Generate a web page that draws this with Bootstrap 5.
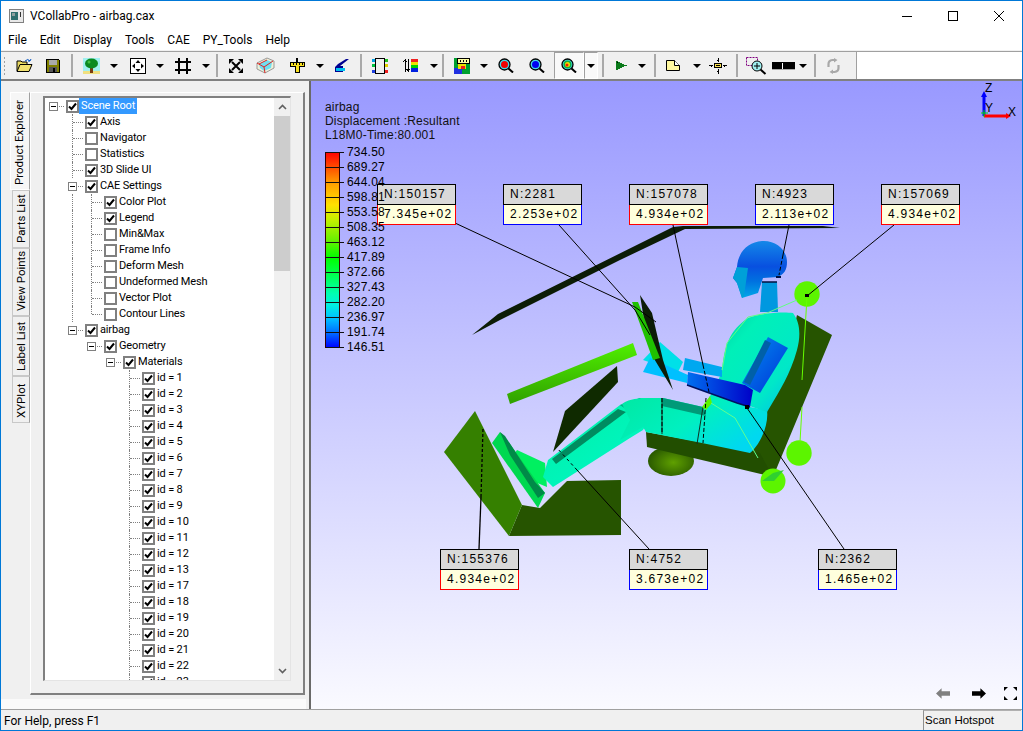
<!DOCTYPE html>
<html lang="en">
<head>
    <meta charset="UTF-8">
    <meta name="viewport" content="width=device-width, initial-scale=1.0">
    <title>VCollabPro - airbag.cax</title>
    <link rel="stylesheet" href="https://cdn.jsdelivr.net/npm/bootstrap@5.3.0/dist/css/bootstrap.min.css">
    <style>
        html, body { height: 100%; margin: 0; overflow: hidden; background: #fff; }
        body { font-family: "Liberation Sans", Arial, sans-serif; font-size: 12px; color: #000; }
        svg { display: block; }
        .app-win { height: 731px; border: 1px solid #0078d7; border-right-width: 1px; background: #fff; }

        .title-row { height: 29px; padding-left: 8px; font-family: Roboto, sans-serif; font-size: 12px; }
        .title-row .app-ico { margin-right: 6px; }
        .win-ctl { width: 46px; }
        .menu-row { height: 21px; padding-left: 7px; font-family: Roboto, sans-serif; font-size: 12px; column-gap: 13px; border-bottom: 1px solid #f0f0f0; }
        .menu-row span { line-height: 21px; }

        .tool-row { height: 30px; border-top: 1px solid #a0a0a0; border-bottom: 2px solid #808080; background: #fff; }
        .tool-strip { width: 856px; background: #f0f0f0; border-right: 1px solid #a0a0a0; padding-left: 8px; }
        .grip { width: 3px; height: 20px; margin-left: -6px; margin-right: 3px; background: radial-gradient(circle, #a0a0a0 1px, transparent 1px) 0 0 / 3px 4px; }
        .tbtn { flex: none; height: 100%; }
        .t8 { width: 8px; } .t12 { width: 12px; } .t14 { width: 14px; } .t16 { width: 16px; } .t26 { width: 26px; }
        .t28 { width: 28px; } .t29 { width: 29px; } .t30 { width: 30px; } .t32 { width: 32px; } .t34 { width: 34px; } .t36 { width: 36px; }
        .tsep { flex: none; width: 2px; height: 23px; background: #a9a9a9; }
        .sep-gap { margin: 0 4px; }
        .caret-dn { width: 0; height: 0; border-left: 4px solid transparent; border-right: 4px solid transparent; border-top: 4px solid #000; }
        .tbtn-on { background: #f9f9f9; border: 1px solid #fff; border-top-color: #a0a0a0; border-left-color: #a0a0a0; }

        .main-row { height: 628px; }
        .left-pane { width: 310px; background: linear-gradient(#f0f0f0 618px, #fafafa 618px); }
        .pane-body { width: 305px; padding-top: 11px; padding-bottom: 14px; }
        .tab-col { width: 29px; padding-left: 9px; }
        .side-tab { writing-mode: vertical-rl; transform: rotate(180deg); background: #f0f0f0; border: 1px solid #c8c8c8; border-left-color: #a0a0a0; width: 18px; margin-left: 2px; line-height: 16px; text-align: left; padding-top: 4px; font-family: Roboto, sans-serif; font-size: 11.5px; }
        .side-tab-on { background: #f6f6f6; border-color: #fff; border-left-color: #a0a0a0; margin-left: 0; width: 20px; }
        .tab-h97 { height: 98px; } .tab-h57 { height: 58px; } .tab-h66 { height: 68px; } .tab-h59 { height: 60px; } .tab-h47 { height: 47px; }
        .tab-page { width: 275px; background: #f0f0f0; border: 1px solid #fff; border-right: 2px solid #808080; border-bottom: 2px solid #808080; padding: 3px 12px 12px 12px; }
        .tree-box { flex: 1; background: #fff; border: 2px solid #808080; border-right: 1px solid #e4e4e4; border-bottom: 1px solid #e4e4e4; overflow: hidden; }
        .tree-list { flex: 1; overflow: hidden; font-family: Roboto, sans-serif; font-size: 11px; letter-spacing: -.15px; }
        .tree-row { height: 16px; }
        .gut { flex: none; width: 19px; height: 16px; position: relative; }
        .gut-pass::before, .gut-tee::before, .gut-end::before { content: ""; position: absolute; left: 8px; top: 0; bottom: 0; border-left: 1px dotted #808080; }
        .gut-end::before { bottom: 8px; }
        .gut-tee::after, .gut-end::after, .gut-exp::after { content: ""; position: absolute; left: 9px; width: 10px; top: 8px; border-top: 1px dotted #808080; }
        .exp-box { position: absolute; left: 4px; top: 4px; width: 9px; height: 9px; background: #fff; border: 1px solid #808080; z-index: 1; }
        .exp-box::after { content: ""; position: absolute; left: 1px; right: 1px; top: 3px; border-top: 1px solid #000; }
        .chk { flex: none; width: 13px; height: 13px; margin-left: 2px; border: 2px solid #808080; background: #fff; }
        .tree-txt { line-height: 16px; padding: 0 2px; white-space: nowrap; }
        .tree-sel { background: #3399ff; color: #fff; }
        .scroll-col { flex: none; width: 16px; background: #f0f0f0; }
        .scroll-btn { height: 18px; }
        .scroll-thumb { height: 155px; background: #cdcdcd; }
        .splitter { width: 5px; background: #f0f0f0; border-right: 2px solid #696969; }

        .scene { flex: 1; position: relative; overflow: hidden; background: linear-gradient(#9999ff, #fafaff); font-family: "Liberation Sans", Arial, sans-serif; letter-spacing: .2px; }
        .scene-art { position: absolute; left: 0; top: 0; }
        .scene-info { position: absolute; left: 14px; top: 19px; line-height: 14px; color: #111; }
        .legend-box { position: absolute; left: 14px; top: 71px; }
        .legend-bar { width: 15px; height: 196px; border: 1px solid #300; border-width: 0 1px; background: repeating-linear-gradient(#111 0 1px, transparent 1px 15px), linear-gradient(#ff0000, #ff5000 8%, #ffa000 16%, #ffe000 27%, #c0f000 35%, #60f000 46%, #00ff00 54%, #00ff70 66%, #00ffb0 72%, #00f0e0 78%, #00c0ff 85%, #0070ff 92%, #0000ff); }
        .legend-nums { margin-top: -7px; }
        .legend-num { height: 15px; line-height: 17px; }
        .legend-num::before { content: ""; width: 4px; border-top: 1px solid #111; margin-right: 3px; }
        .callout { position: absolute; width: 79px; height: 41px; letter-spacing: 1.25px; line-height: 19px; }
        .callout-id { height: 21px; background: #d9d9d9; border: 1px solid #000; padding-left: 6px; overflow: hidden; white-space: nowrap; }
        .callout-val { height: 20px; background: #ffffdd; border: 1px solid; border-top: 0; padding-left: 6px; overflow: hidden; white-space: nowrap; }
        .val-red { border-color: #f00; } .val-blue { border-color: #00f; }
        .c-a { left: 66px; top: 103px; } .c-b { left: 192px; top: 103px; } .c-c { left: 318px; top: 103px; }
        .c-d { left: 444px; top: 103px; } .c-e { left: 570px; top: 103px; } .c-f { left: 129px; top: 468px; }
        .c-g { left: 318px; top: 468px; } .c-h { left: 507px; top: 468px; }
        .nav-btns { position: absolute; right: 5px; bottom: 9px; }
        .nav-prev { margin-right: 22px; } .nav-next { margin-right: 18px; }

        .status-row { height: 21px; background: #f0f0f0; border-top: 1px solid #a0a0a0; font-family: Roboto, sans-serif; }
        .status-txt { padding-left: 3px; line-height: 22px; }
        .status-pane { width: 98px; margin-right: 1px; font-family: "Liberation Sans", sans-serif; font-size: 11.5px; line-height: 18px; border-left: 1px solid #909090; border-top: 1px solid #b0b0b0; padding-left: 1px; }
    </style>
</head>
<body>
<div class="app-win d-flex flex-column">

    <!-- title bar -->
    <div class="title-row d-flex align-items-center flex-shrink-0">
        <svg class="app-ico" width="15" height="14" viewBox="0 0 15 14" shape-rendering="crispEdges"><rect x=".5" y=".5" width="14" height="13" fill="#e8e8e8" stroke="#808080"/><rect x="2" y="3" width="7" height="8" fill="#2f6f6f"/><rect x="3" y="4" width="3" height="3" fill="#90a0a0"/><rect x="11" y="3" width="1" height="5" fill="#333"/></svg>
        <span>VCollabPro - airbag.cax</span>
        <div class="ms-auto d-flex">
            <div class="win-ctl d-flex justify-content-center"><svg width="10" height="10" viewBox="0 0 10 10"><path d="M0 5.500h10" stroke="#000"/></svg></div>
            <div class="win-ctl d-flex justify-content-center"><svg width="10" height="10" viewBox="0 0 10 10"><rect x=".5" y=".5" width="9" height="9" fill="none" stroke="#000"/></svg></div>
            <div class="win-ctl d-flex justify-content-center"><svg width="10" height="10" viewBox="0 0 10 10"><path d="M0 0l10 10M10 0L0 10" stroke="#000"/></svg></div>
        </div>
    </div>

    <!-- menu -->
    <div class="menu-row d-flex flex-shrink-0">
        <span>File</span><span>Edit</span><span>Display</span><span>Tools</span><span>CAE</span><span>PY_Tools</span><span>Help</span>
    </div>

    <!-- toolbar -->
    <div class="tool-row d-flex flex-shrink-0">
        <div class="tool-strip d-flex align-items-center">
            <div class="grip"></div>
            <div class="tbtn t30 d-flex align-items-center justify-content-center"><svg width="17" height="15" viewBox="0 0 17 15"><path d="M1 13V3h4l1 1h5v2" fill="#e8d860" stroke="#000"/><path d="M1 13.500 4 6.500h12l-3 7z" fill="#f0e070" stroke="#000"/><path d="M9 3q3-3 5 0M14 3l1-2M14 3l-2 0" fill="none" stroke="#0050c0"/></svg></div>
            <div class="tbtn t28 d-flex align-items-center justify-content-center"><svg width="14" height="14" viewBox="0 0 14 14" shape-rendering="crispEdges"><path d="M.5.5h12l1 1v12H.5z" fill="#808000" stroke="#000"/><rect x="3" y="1" width="8" height="5" fill="#aaa"/><rect x="3" y="8" width="8" height="5" fill="#555"/><rect x="7" y="9" width="2" height="4" fill="#000"/></svg></div>
            <div class="tsep sep-gap"></div>
            <div class="tbtn t29 d-flex align-items-center justify-content-center"><svg width="17" height="16" viewBox="0 0 17 16"><rect width="17" height="14" fill="#a0f0f0"/><rect y="13" width="17" height="3" fill="#f0e080"/><rect x="7" y="8" width="3" height="7" fill="#7a3b10"/><ellipse cx="8.500" cy="5.500" rx="6.500" ry="5" fill="#0a8a20"/><circle cx="6" cy="4" r="1.500" fill="#40c040"/></svg></div>
            <div class="tbtn t16 d-flex align-items-center justify-content-center"><div class="caret-dn"></div></div>
            <div class="tbtn t32 d-flex align-items-center justify-content-center"><svg width="16" height="16" viewBox="0 0 16 16"><rect x=".5" y=".5" width="15" height="15" fill="#fff" stroke="#000"/><path d="M8 2 5.500 5h5zM8 14l-2.500-3h5zM2 8l3-2.500v5zM14 8l-3-2.500v5z" fill="#000"/></svg></div>
            <div class="tbtn t12 d-flex align-items-center justify-content-center"><div class="caret-dn"></div></div>
            <div class="tbtn t34 d-flex align-items-center justify-content-center"><svg width="16" height="16" viewBox="0 0 16 16" shape-rendering="crispEdges"><path d="M4 0v16M12 0v16M0 4h16M0 12h16" stroke="#000" stroke-width="1.500"/></svg></div>
            <div class="tbtn t12 d-flex align-items-center justify-content-center"><div class="caret-dn"></div></div>
            <div class="tsep sep-gap"></div>
            <div class="tbtn t28 d-flex align-items-center justify-content-center"><svg width="14" height="14" viewBox="0 0 14 14"><path d="M3 3l8 8M11 3l-8 8" stroke="#000" stroke-width="2"/><path d="M0 0h5L0 5zM14 0H9l5 5zM0 14h5l-5-5zM14 14H9l5-5z" fill="#000"/></svg></div>
            <div class="tbtn t30 d-flex align-items-center justify-content-center"><svg width="19" height="17" viewBox="0 0 19 17"><path d="M1 6l10-5 7 3v7l-9 5-8-4z" fill="#f0f0d8" stroke="#999"/><path d="M3 7l8-4 5 2-1 6-7 3-4-3z" fill="#70e0f0"/><path d="M1 6l7 4 1 6M8 10l9-6M3 7l8-4" fill="none" stroke="#e02020"/></svg></div>
            <div class="tbtn t34 d-flex align-items-center justify-content-center"><svg width="15" height="15" viewBox="0 0 15 15" shape-rendering="crispEdges"><path d="M0 4.500h14v4H9v6H5v-6H0z" fill="#f8e020" stroke="#000"/><path d="M3 5v2M6 5v2M9 5v2M12 5v2" stroke="#000"/><rect x="6" y="0" width="2" height="4" fill="#000"/></svg></div>
            <div class="tbtn t12 d-flex align-items-center justify-content-center"><div class="caret-dn"></div></div>
            <div class="tbtn t30 d-flex align-items-center justify-content-center"><svg width="15" height="15" viewBox="0 0 15 15"><path d="M1 14V9l3-3 8-5 3 0-9 7h3v6z" fill="#000090"/><path d="M2 10h9v3H2z" fill="#00c0f0"/></svg></div>
            <div class="tsep sep-gap"></div>
            <div class="tbtn t28 d-flex align-items-center justify-content-center"><svg width="16" height="16" viewBox="0 0 16 16" shape-rendering="crispEdges"><rect x="3.500" y=".5" width="9" height="15" fill="#f0f0f0" stroke="#000"/><rect x="0" y="1" width="3" height="3" fill="#00a0e0"/><rect x="0" y="6" width="3" height="3" fill="#00c040"/><rect x="0" y="12" width="3" height="3" fill="#2040e0"/><rect x="13" y="1" width="3" height="3" fill="#20c020"/><rect x="13" y="6" width="3" height="3" fill="#e0d000"/><rect x="13" y="12" width="3" height="3" fill="#f02020"/></svg></div>
            <div class="tbtn t32 d-flex align-items-center justify-content-center"><svg width="15" height="15" viewBox="0 0 15 15" shape-rendering="crispEdges"><rect x="8" y="1" width="7" height="3" fill="#f02020"/><rect x="8" y="4" width="7" height="3" fill="#f0e000"/><rect x="8" y="7" width="7" height="3" fill="#00d000"/><rect x="8" y="10" width="7" height="4" fill="#0020e0"/><path d="M2 1v13M5 1v13" stroke="#000"/><path d="M.5 4 2 2l1.500 2M3.500 11 5 13l1.500-2" stroke="#000" fill="none"/></svg></div>
            <div class="tbtn t16 d-flex align-items-center justify-content-center"><div class="caret-dn"></div></div>
            <div class="tsep"></div>
            <div class="tbtn t36 d-flex align-items-center justify-content-center"><svg width="16" height="16" viewBox="0 0 16 16" shape-rendering="crispEdges"><rect width="16" height="16" fill="#00a030"/><rect y="10" width="8" height="6" fill="#2030e0"/><rect x="4" y="6" width="8" height="5" fill="#f0e000"/><rect x="7" y="8" width="4" height="3" fill="#f02020"/><rect x="3.500" y=".5" width="12" height="5" fill="#ffffa0" stroke="#000"/><path d="M6 2v2M9 2v2M12 2v2" stroke="#000"/></svg></div>
            <div class="tbtn t8 d-flex align-items-center justify-content-center"><div class="caret-dn"></div></div>
            <div class="tbtn t36 d-flex align-items-center justify-content-center"><svg width="16" height="15" viewBox="0 0 16 15"><circle cx="6.500" cy="6.500" r="5.500" fill="#40d8e8" stroke="#000" stroke-width="1.300"/><circle cx="6.500" cy="6.500" r="3.500" fill="#f00000"/><path d="M10.500 10.500l4.500 4" stroke="#000" stroke-width="2"/></svg></div>
            <div class="tbtn t26 d-flex align-items-center justify-content-center"><svg width="16" height="15" viewBox="0 0 16 15"><circle cx="6.500" cy="6.500" r="5.500" fill="#40d8e8" stroke="#000" stroke-width="1.300"/><circle cx="6.500" cy="6.500" r="3.500" fill="#0000f0"/><path d="M10.500 10.500l4.500 4" stroke="#000" stroke-width="2"/></svg></div>
            <div class="tbtn t30 tbtn-on ms-1 d-flex align-items-center justify-content-center"><svg width="16" height="15" viewBox="0 0 16 15"><circle cx="6.500" cy="6.500" r="5.500" fill="#40d8e8" stroke="#000" stroke-width="1.300"/><circle cx="6.500" cy="6.500" r="4" fill="#10b040"/><circle cx="6.500" cy="6.500" r="2.500" fill="#f0e000"/><circle cx="6" cy="7" r="1.500" fill="#f02000"/><path d="M10.500 10.500l4.500 4" stroke="#000" stroke-width="2"/></svg></div>
            <div class="tbtn t14 tbtn-on d-flex align-items-center justify-content-center"><div class="caret-dn"></div></div>
            <div class="tsep sep-gap"></div>
            <div class="tbtn t26 d-flex align-items-center justify-content-center"><svg width="11" height="10" viewBox="0 0 11 10" shape-rendering="crispEdges"><path d="M0 0h2v1h2v1h2v1h2v1h3v1H8v1H6v1H4v1H2v1H0z" fill="#0a7a1a"/><rect x="1" y="1" width="1" height="1" fill="#000"/></svg></div>
            <div class="tbtn t16 d-flex align-items-center justify-content-center"><div class="caret-dn"></div></div>
            <div class="tsep sep-gap"></div>
            <div class="tbtn t26 d-flex align-items-center justify-content-center"><svg width="14" height="11" viewBox="0 0 14 11"><path d="M.5.5h8l5 5v5H.5z" fill="#fff8a0" stroke="#000"/><path d="M8.500.5v5h5" fill="#fff" stroke="#000"/></svg></div>
            <div class="tbtn t14 d-flex align-items-center justify-content-center ms-1"><div class="caret-dn"></div></div>
            <div class="tbtn t28 d-flex align-items-center justify-content-center"><svg width="18" height="16" viewBox="0 0 18 16" shape-rendering="crispEdges"><rect x="5.500" y="5.500" width="7" height="4" fill="#f8e050" stroke="#000"/><path d="M9 0v4M9 11v5M0 7.500h4M14 7.500h4" stroke="#000"/><path d="M8 2h2M8 13h2M2 6.500v2M15 6.500v2" stroke="#000"/><rect x="7" y="7" width="4" height="1" fill="#000"/></svg></div>
            <div class="tsep sep-gap"></div>
            <div class="tbtn t28 d-flex align-items-center justify-content-center"><svg width="21" height="18" viewBox="0 0 21 18"><rect x=".5" y=".5" width="11" height="8" fill="none" stroke="#800080" stroke-dasharray="2 1"/><circle cx="11" cy="9" r="5" fill="#a0f0f0" stroke="#000"/><path d="M8 9h6M11 6v6" stroke="#000"/><path d="M14.500 12.500l5 4.500" stroke="#000" stroke-width="2"/></svg></div>
            <div class="tbtn t26 d-flex align-items-center justify-content-center"><svg width="23" height="8" viewBox="0 0 23 8" shape-rendering="crispEdges"><rect width="23" height="7" fill="#000"/><rect x="10" y="1" width="1" height="6" fill="#fff"/><rect y="7" width="23" height="1" fill="#aaa"/></svg></div>
            <div class="tbtn t14 d-flex align-items-center justify-content-center"><div class="caret-dn"></div></div>
            <div class="tsep sep-gap"></div>
            <div class="tbtn t26 d-flex align-items-center justify-content-center"><svg width="13" height="16" viewBox="0 0 13 16"><path d="M1.500 9V6q0-3.500 4-4h2M11.500 7v3q0 3.500-4 4h-2" fill="none" stroke="#a8a8a8" stroke-width="2.200"/><path d="M7 0l3.500 2L7 4.500zM6 11.500 2.500 14 6 16z" fill="#a8a8a8"/></svg></div>
        </div>
    </div>

    <!-- main area -->
    <div class="main-row d-flex flex-shrink-0">
        <div class="left-pane d-flex flex-shrink-0">
            <div class="pane-body d-flex">
                <div class="tab-col d-flex flex-column flex-shrink-0">
                    <div class="side-tab side-tab-on tab-h97">Product Explorer</div>
                    <div class="side-tab tab-h57">Parts List</div>
                    <div class="side-tab tab-h66">View Points</div>
                    <div class="side-tab tab-h59">Label List</div>
                    <div class="side-tab tab-h47">XYPlot</div>
                </div>
                <div class="tab-page d-flex flex-shrink-0">
                    <div class="tree-box d-flex">
                        <div class="tree-list" id="tree"></div>
                        <div class="scroll-col d-flex flex-column">
                            <div class="scroll-btn d-flex align-items-center justify-content-center"><svg width="9" height="6" viewBox="0 0 9 6"><path d="M1 5l3.500-3.500L8 5" fill="none" stroke="#606060" stroke-width="1.600"/></svg></div>
                            <div class="scroll-thumb"></div>
                            <div class="scroll-btn mt-auto d-flex align-items-center justify-content-center"><svg width="9" height="6" viewBox="0 0 9 6"><path d="M1 1l3.500 3.500L8 1" fill="none" stroke="#606060" stroke-width="1.600"/></svg></div>
                        </div>
                    </div>
                </div>
            </div>
            <div class="splitter flex-shrink-0"></div>
        </div>

        <!-- 3D view -->
        <div class="scene">
            <svg class="scene-art" width="709" height="628" viewBox="311 81 709 628">
                <defs>
                    <linearGradient id="gHead" x1="0" y1="0" x2="0" y2="1"><stop offset="0" stop-color="#1488e8"/><stop offset=".45" stop-color="#0850e0"/><stop offset=".7" stop-color="#0070e0"/><stop offset="1" stop-color="#00a8e8"/></linearGradient>
                    <linearGradient id="gTorso" x1="0" y1="0" x2="1" y2="1"><stop offset="0" stop-color="#00c8a0"/><stop offset=".3" stop-color="#00f0b8"/><stop offset=".7" stop-color="#00e8c8"/><stop offset="1" stop-color="#00b8f0"/></linearGradient>
                    <linearGradient id="gThigh" x1="0" y1="0" x2="1" y2=".6"><stop offset="0" stop-color="#00e8a0"/><stop offset=".55" stop-color="#00f0c0"/><stop offset="1" stop-color="#00d8f0"/></linearGradient>
                    <linearGradient id="gArm" x1="0" y1="0" x2="1" y2="1"><stop offset="0" stop-color="#0090f0"/><stop offset="1" stop-color="#0030d8"/></linearGradient>
                    <linearGradient id="gFore" x1="0" y1="0" x2="1" y2="0"><stop offset="0" stop-color="#0070f0"/><stop offset="1" stop-color="#0000c8"/></linearGradient>
                    <linearGradient id="gTube" x1="0" y1="0" x2="0" y2="1"><stop offset="0" stop-color="#50f000"/><stop offset="1" stop-color="#30a000"/></linearGradient>
                    <linearGradient id="gShin" x1="0" y1="0" x2="1" y2="1"><stop offset="0" stop-color="#00f0a0"/><stop offset="1" stop-color="#00f8d0"/></linearGradient>
                    <radialGradient id="gPod" cx=".55" cy=".55" r=".55"><stop offset="0" stop-color="#5fa000"/><stop offset="1" stop-color="#2a5a00"/></radialGradient>
                </defs>

                <!-- windshield and column -->
                <path d="M472 335 498 314 673 227 683 226 823 226 840 228 685 229 620 260 500 320z" fill="#0c1c06"/>
                <path d="M507 394 633 343 637 355 510 404z" fill="url(#gTube)"/>
                <path d="M553 452 565 411 617 366 618 382z" fill="#0f2a00"/>

                <!-- floor and pedals plate -->
                <path d="M509 536 522 505 540 508 567 481 621 480 621 535z" fill="#265400"/>
                <path d="M475 411 444 452 509 536 522 505z" fill="#358000"/>

                <!-- seat -->
                <ellipse cx="671" cy="461" rx="23" ry="15" fill="url(#gPod)"/>
                <path d="M797 315 832 335 773 477 750 453 760 400 790 345z" fill="#265400"/>
                <path d="M646 432 760 453 773 477 647 447z" fill="#224e00"/>

                <!-- foot and shin -->
                <path d="M517 450 545 463 547 487 530 480 510 460z" fill="#00f060"/>
                <path d="M492 443 500 432 510 444 545 493 538 508z" fill="#00d850"/>
                <path d="M500 432 505 436 535 482 545 493 538 498 510 455z" fill="#008a48"/>
                <path d="M548 460 620 405 640 398 662 398 643 430 630 438 553 487 543 477z" fill="url(#gShin)"/>
                <path d="M552 459 618 409 626 412 556 464z" fill="#008c60"/>
                <path d="M620 405 640 398 645 404 630 412z" fill="#00a880"/>

                <!-- thigh and hip -->
                <path d="M622 404C630 398 640 398 663 398L703 407 712 393 750 407 767 410C769 425 760 445 750 453L702 443 646 432 643 427 620 440 630 420z" fill="url(#gThigh)"/>
                <path d="M663 398 703 407 706 416 662 406z" fill="#009a78"/>
                <path d="M662 398v36M703 407l-6 37" stroke="#103020" fill="none"/>

                <!-- torso, neck, head -->
                <path d="M760 312 762 282 777 282 778 312z" fill="#0098e0"/>
                <path d="M722 372C724 345 730 330 748 318 765 312 785 312 793 313 800 322 801 335 797 350 790 375 780 390 770 407L767 412 712 393z" fill="url(#gTorso)"/>
                <path d="M768 337 788 348 760 393 742 383z" fill="url(#gArm)"/>
                <path d="M765 340 771 343 750 385 744 382z" fill="#0060a8"/>
                <path d="M737 267C738 252 748 242 762 241 776 240 787 250 787 262 787 270 784 274 778 277L763 278 758 293 742 298 737 283 733 278z" fill="url(#gHead)"/>
                <path d="M733 278 737 267 748 268 744 296 742 298 737 283z" fill="#00a0d8"/>
                <path d="M776 277h5" stroke="#001040" stroke-width="2"/>
                <path d="M762 282h15" stroke="#001040" stroke-width="1.500"/>

                <!-- arms and hands -->
                <path d="M685 358 722 367 722 377 683 370z" fill="#00a8f0"/>
                <path d="M643 360 660 342 683 362 678 372z" fill="#00e0e8"/>
                <path d="M650 358 688 375 687 383 643 372z" fill="#00c0ff"/>
                <path d="M688 372 745 385 753 390 750 407 737 403 687 385z" fill="url(#gFore)"/>
                <path d="M687 385 737 403 750 407" fill="none" stroke="#001060" stroke-width="1.500"/>

                <!-- steering wheel -->
                <path d="M640 295 652 313 663 360 673 390 653 357 644 320z" fill="#0c1c06"/>
                <path d="M632 302 638 302 660 358 653 360z" fill="#20c000"/>

                <!-- restraint spheres and belts -->
                <circle cx="807" cy="294" r="12.700" fill="#5cf500"/>
                <circle cx="799" cy="453" r="12.700" fill="#5cf500"/>
                <circle cx="773" cy="481" r="12.500" fill="#5cf500"/>
                <path d="M762 481 773 473 784 470 774 481z" fill="#30d030"/>
                <path d="M702 407 710 396 712 403 706 410z" fill="#5cf500"/>
                <path d="M807 297 802 380M802 407 800 442" stroke="#66ff00" fill="none"/>
                <path d="M797 300 767 313 748 317 727 343 722 370" stroke="#60ff80" fill="none"/>
                <path d="M711 403 735 418 758 458" stroke="#60ff90" fill="none"/>

                <!-- pick lines -->
                <g stroke="#000" fill="none" stroke-width="1">
                    <path d="M455 223 635 307 656 322"/>
                    <path d="M559 225 635 310 650 335"/>
                    <path d="M673 225 703 365"/>
                    <path d="M703 365 709 392" stroke-dasharray="4 2"/>
                    <path d="M789 225 783 255"/>
                    <path d="M783 255 779 275" stroke-dasharray="4 2"/>
                    <path d="M894 225 807 296"/>
                    <path d="M479 549 481 497" stroke-width="1.300"/>
                    <path d="M481 497 483 428" stroke-dasharray="3 2" stroke-width="1.300"/>
                    <path d="M649 549 577 470"/>
                    <path d="M577 470 557 448" stroke-dasharray="3 3"/>
                    <path d="M747 408 844 549"/>
                    <path d="M706 398 703 443M662 398v36" stroke-dasharray="4 2"/>
                </g>
                <rect x="805" y="294" width="4" height="3" fill="#000"/>
                <rect x="745" y="405" width="4" height="4" fill="#000"/>

                <!-- axis triad -->
                <path d="M984 116V95" stroke="#0000ff" stroke-width="3"/>
                <path d="M984 91l-3 6h6z" fill="#0000ff"/>
                <path d="M984 116h24" stroke="#ff0000" stroke-width="3"/>
                <path d="M1011 116l-5-3v6z" fill="#ff0000"/>
                <path d="M981 113h7M984 110v7" stroke="#00e000"/>
                <text x="985" y="92" font-size="12" fill="#000">Z</text>
                <text x="985" y="112" font-size="12" fill="#000">Y</text>
                <text x="1008" y="116" font-size="12" fill="#000">X</text>
            </svg>

            <div class="callout c-a"><div class="callout-id">N:150157</div><div class="callout-val val-red">7.345e+02</div></div>
            <div class="callout c-b"><div class="callout-id">N:2281</div><div class="callout-val val-blue">2.253e+02</div></div>
            <div class="callout c-c"><div class="callout-id">N:157078</div><div class="callout-val val-red">4.934e+02</div></div>
            <div class="callout c-d"><div class="callout-id">N:4923</div><div class="callout-val val-blue">2.113e+02</div></div>
            <div class="callout c-e"><div class="callout-id">N:157069</div><div class="callout-val val-red">4.934e+02</div></div>
            <div class="callout c-f"><div class="callout-id">N:155376</div><div class="callout-val val-red">4.934e+02</div></div>
            <div class="callout c-g"><div class="callout-id">N:4752</div><div class="callout-val val-blue">3.673e+02</div></div>
            <div class="callout c-h"><div class="callout-id">N:2362</div><div class="callout-val val-blue">1.465e+02</div></div>

            <div class="scene-info">airbag<br>Displacement :Resultant<br>L18M0-Time:80.001</div>
            <div class="legend-box d-flex">
                <div class="legend-bar"></div>
                <div class="legend-nums" id="legendNums"></div>
            </div>

            <div class="nav-btns d-flex align-items-center">
                <svg class="nav-prev" width="14" height="11" viewBox="0 0 15 11"><path d="M0 5.500 6 0v3h9v5H6v3z" fill="#808080"/></svg>
                <svg class="nav-next" width="14" height="11" viewBox="0 0 15 11"><path d="M15 5.500 9 0v3H0v5h9v3z" fill="#000"/></svg>
                <svg width="13" height="13" viewBox="0 0 13 13"><path d="M0 0h4L0 4zM13 0H9l4 4zM0 13h4l-4-4zM13 13H9l4-4z" fill="#000"/></svg>
            </div>
        </div>
    </div>

    <!-- status bar -->
    <div class="status-row d-flex flex-grow-1">
        <div class="status-txt">For Help, press F1</div>
        <div class="status-pane ms-auto">Scan Hotspot</div>
    </div>
</div>

<script src="https://cdn.jsdelivr.net/npm/bootstrap@5.3.0/dist/js/bootstrap.bundle.min.js"></script>
<script>
    // legend values, top to bottom
    const legendVals = ["734.50", "689.27", "644.04", "598.81", "553.58", "508.35", "463.12", "417.89", "372.66", "327.43", "282.20", "236.97", "191.74", "146.51"];
    document.getElementById("legendNums").innerHTML = legendVals
        .map(v => `<div class="legend-num d-flex align-items-center">${v}</div>`).join("");

    // tree rows: gutter cells, label, checked
    // p = line passes through, t = tee, e = last child, x = expander, _ = empty
    const ids = [1, 2, 3, 4, 5, 6, 7, 8, 9, 10, 11, 12, 13, 17, 18, 19, 20, 21, 22, 23];
    const rows = [
        ["x", "Scene Root", 1],
        ["_t", "Axis", 1],
        ["_t", "Navigator", 0],
        ["_t", "Statistics", 0],
        ["_t", "3D Slide UI", 1],
        ["_x", "CAE Settings", 1],
        ["_pt", "Color Plot", 1],
        ["_pt", "Legend", 1],
        ["_pt", "Min&amp;Max", 0],
        ["_pt", "Frame Info", 0],
        ["_pt", "Deform Mesh", 0],
        ["_pt", "Undeformed Mesh", 0],
        ["_pt", "Vector Plot", 0],
        ["_pe", "Contour Lines", 0],
        ["_x", "airbag", 1],
        ["__x", "Geometry", 1],
        ["___x", "Materials", 1]
    ];
    ids.forEach(n => rows.push(["____t", "id = " + n, 1]));

    const gutClass = { p: "gut-pass", t: "gut-tee", e: "gut-end", x: "gut-exp", _: "" };
    const checkMark = '<svg width="9" height="9" viewBox="0 0 9 9"><path d="M1 4.500 3.500 7 8 1.500" fill="none" stroke="#000" stroke-width="2"/></svg>';

    document.getElementById("tree").innerHTML = rows.map(([guts, label, on], i) => {
        const cells = [...guts].map(g =>
            `<div class="gut ${gutClass[g]}">${g === "x" ? '<div class="exp-box"></div>' : ""}</div>`).join("");
        const check = `<div class="chk d-flex align-items-center justify-content-center">${on ? checkMark : ""}</div>`;
        return `<div class="tree-row d-flex align-items-center">${cells}${check}<div class="tree-txt ${i === 0 ? "tree-sel" : ""}">${label}</div></div>`;
    }).join("");
</script>
</body>
</html>
